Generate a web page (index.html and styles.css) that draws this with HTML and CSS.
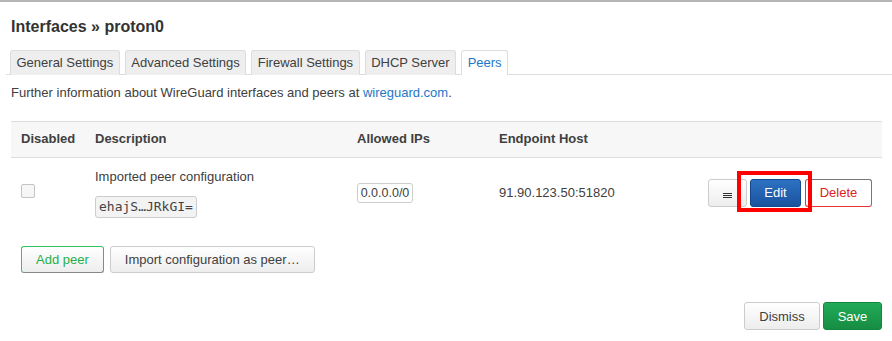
FILE: index.html
```html
<!DOCTYPE html>
<html lang="en">
<head>
  <meta charset="UTF-8">
  <meta name="viewport" content="width=device-width, initial-scale=1.0">
  <title>Interfaces » proton0</title>
  <link rel="stylesheet" href="styles.css">
</head>
<body>

  <div class="topline"></div>

  <div class="page">
    <h2>Interfaces » proton0</h2>

    <!-- tabs -->
    <ul class="tabs">
      <li class="tab">General Settings</li>
      <li class="tab">Advanced Settings</li>
      <li class="tab">Firewall Settings</li>
      <li class="tab">DHCP Server</li>
      <li class="tab active">Peers</li>
    </ul>

    <p class="info">Further information about WireGuard interfaces and peers at <a href="#">wireguard.com</a>.</p>

    <table class="peers">
      <colgroup>
        <col class="c-dis">
        <col class="c-desc">
        <col class="c-ips">
        <col class="c-host">
        <col>
      </colgroup>
      <thead>
        <tr>
          <th>Disabled</th>
          <th>Description</th>
          <th>Allowed IPs</th>
          <th>Endpoint Host</th>
          <th></th>
        </tr>
      </thead>
      <tbody>
        <tr>
          <td><span class="checkbox"></span></td>
          <td>
            <div class="desc">Imported peer configuration</div>
            <code class="key">ehajS…JRkGI=</code>
          </td>
          <td><span class="ip">0.0.0.0/0</span></td>
          <td>91.90.123.50:51820</td>
          <td class="actions">
            <div class="btn-group">
              <button class="btn btn-menu"><span class="burger"></span></button>
              <button class="btn btn-edit">Edit</button>
              <button class="btn btn-delete">Delete</button>
              <span class="highlight"></span>
            </div>
          </td>
        </tr>
      </tbody>
    </table>

    <div class="table-actions">
      <button class="btn btn-add">Add peer</button>
      <button class="btn">Import configuration as peer…</button>
    </div>

    <div class="footer">
      <button class="btn btn-dismiss">Dismiss</button>
      <button class="btn btn-save">Save</button>
    </div>
  </div>

</body>
</html>
```

FILE: styles.css
```css
body {
  margin: 0;
  font-family: "Liberation Sans", Arial, sans-serif;
  font-size: 13px;
  color: #404040;
  background: #fff;
}

.topline {
  height: 2px;
  background: #b4b4b4;
}

.page {
  padding: 0 10px 0 11px;
}

h2 {
  margin: 15px 0 0;
  font-size: 16px;
  line-height: 20px;
  color: #333;
}

.tabs {
  display: flex;
  list-style: none;
  margin: 13px -10px 0 -5px;
  padding: 0 0 0 4px;
  border-bottom: 1px solid #ddd;
}

.tab {
  margin-right: 5px;
  margin-bottom: -1px;
  padding: 4px 5.5px 3px;
  line-height: 16px;
  background: #eee;
  border: 1px solid #ddd;
  border-bottom: none;
  border-radius: 3px 3px 0 0;
  color: #404040;
}

.tab.active {
  background: #fff;
  color: #1e77c8;
  padding-bottom: 4px;
}

.info {
  margin: 9px 0 0;
  line-height: 18px;
}

.info a {
  color: #1e77c8;
  text-decoration: none;
}

.peers {
  width: 100%;
  margin-top: 19px;
  border-collapse: collapse;
  table-layout: fixed;
}

.c-dis { width: 74px; }
.c-desc { width: 262px; }
.c-ips { width: 142px; }
.c-host { width: 180px; }

.peers th {
  text-align: left;
  font-weight: bold;
  padding: 8px 10px 9px;
  line-height: 18px;
  background: #f7f7f7;
  border-top: 1px solid #ddd;
  border-bottom: 1px solid #ddd;
}

.peers td {
  padding: 10px;
  line-height: 18px;
  vertical-align: middle;
}

.checkbox {
  display: block;
  width: 12px;
  height: 12px;
  margin-top: -4px;
  border: 1px solid #c4c4c4;
  border-radius: 2px;
  background: #f6f6f6;
}

.desc {
  margin-bottom: 10px;
}

.key {
  display: inline-block;
  padding: 1px 3px;
  line-height: 18px;
  font-family: "DejaVu Sans Mono", "Liberation Mono", monospace;
  font-size: 13px;
  color: #444;
  background: #f3f3f3;
  border: 1px solid #ccc;
  border-radius: 3px;
}

.ip {
  display: inline-block;
  box-sizing: border-box;
  width: 56px;
  margin-top: -5px;
  line-height: 18px;
  font-size: 12.5px;
  text-align: center;
  border: 1px solid #ccc;
  border-radius: 3px;
}

.actions {
  text-align: right;
}

.btn-group {
  position: relative;
  display: inline-flex;
  gap: 3px;
  margin-top: 4px;
}

.btn {
  height: 28px;
  padding: 0 14px;
  font-family: inherit;
  font-size: 13px;
  color: #404040;
  background: linear-gradient(#fff, #ededed);
  border: 1px solid #ccc;
  border-radius: 3px;
}

.btn-menu {
  width: 39px;
  padding: 0;
}

.burger {
  display: block;
  width: 9px;
  height: 1px;
  margin: 6px auto 0;
  background: #333;
  box-shadow: 0 2px 0 #333, 0 -2px 0 #333;
}

.btn-edit {
  width: 51px;
  padding: 0;
  color: #fff;
  background: linear-gradient(#2d72c2, #1a539f);
  border-color: #174a8d;
}

.btn-delete {
  width: 67px;
  margin-left: 1px;
  padding: 0;
  color: #d9251d;
  background: #fff;
  border-color: #777 #777 #e33 #e33;
}

.highlight {
  position: absolute;
  left: 29px;
  top: -8px;
  width: 67px;
  height: 33px;
  border: 4px solid #f00;
}

.table-actions {
  display: flex;
  gap: 6px;
  margin: 18px 0 0 10px;
}

.btn-add {
  color: #26b04c;
  border-color: #35c460 #888 #888 #35c460;
  padding: 0 14px;
}

.table-actions .btn {
  height: 27px;
}

.footer {
  display: flex;
  justify-content: flex-end;
  gap: 3px;
  margin-top: 29px;
}

.btn-dismiss {
  width: 76px;
  padding: 0;
}

.btn-save {
  width: 59px;
  padding: 0;
  color: #fff;
  background: linear-gradient(#22ab58, #168d42);
  border-color: #15843d;
}
```
